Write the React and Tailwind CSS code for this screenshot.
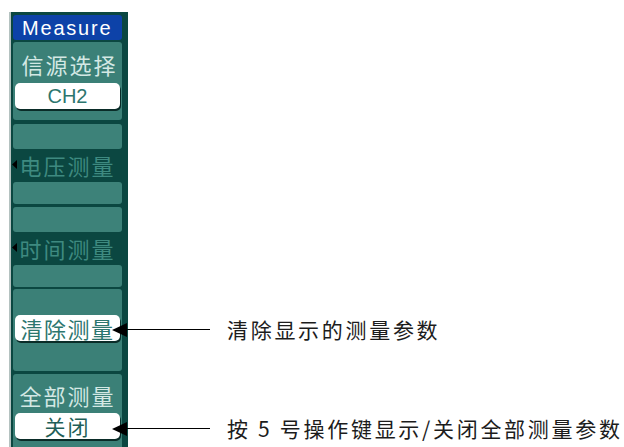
import React from "react";

const cjk = "font-['Noto_Sans_CJK_SC','Noto_Sans_CJK_JP',sans-serif]";

function Button({ children, className = "" }) {
  return (
    <div
      className={`mx-[2px] h-[26px] rounded-[5px] bg-white shadow-[1px_2px_0_#0a2c28] flex items-center justify-center ${className}`}
    >
      {children}
    </div>
  );
}

function Slot({ className = "" }) {
  return <div className={`rounded-[3px] bg-[#3d8279] ${className}`} />;
}

function DisabledItem({ label }) {
  return (
    <div className="h-[80px] flex flex-col">
      <Slot className="h-[25px]" />
      <div className="relative h-[31px] flex items-center justify-center">
        <svg className="absolute left-[-1px] top-[11px]" width="5" height="9" viewBox="0 0 5 9">
          <polygon points="0,4.5 5,0 5,9" fill="#000" />
        </svg>
        <span className={`${cjk} text-[22px] tracking-[2px] text-[#3e8a80] leading-none`}>{label}</span>
      </div>
      <Slot className="mt-[2px] h-[22px]" />
    </div>
  );
}

function Callout({ top, text }) {
  return (
    <div className="absolute left-[112px] flex items-center" style={{ top }}>
      <svg width="15" height="14" viewBox="0 0 15 14">
        <polygon points="0,7 15,0 15,14" fill="#000" />
      </svg>
      <div className="w-[83px] h-[1.5px] bg-black" />
      <span className={`${cjk} ml-[17px] text-[21px] tracking-[2.7px] text-[#1c1c1c] leading-none whitespace-nowrap`}>
        {text}
      </span>
    </div>
  );
}

export default function App() {
  return (
    <div className="relative w-[624px] h-[447px] bg-white overflow-hidden">
      <div className="ml-[9px] pt-[12px]">
        <div className="w-[119px] h-[435px] border-l-2 border-[#b4c2c0] bg-[#0b4741] pl-[2px] pr-[6px] pt-[3px] flex flex-col">
          {/* Title */}
          <div className="h-[25px] rounded-[3px] bg-[#0d42a8] flex items-center pl-[9px]">
            <span className="font-['Liberation_Sans',sans-serif] text-[20px] tracking-[1.8px] text-white leading-none">
              Measure
            </span>
          </div>

          {/* 信源选择 */}
          <div className="mt-[2px] h-[78px] rounded-[3px] bg-[#3b8077] pt-[9px]">
            <div className={`${cjk} h-[26px] flex items-center justify-center text-[22px] tracking-[2px] text-[#d3e8e4] leading-none pl-[4px]`}>
              信源选择
            </div>
            <Button className="mt-[6px]">
              <span className="font-['Liberation_Sans',sans-serif] text-[20px] text-[#2c766e] leading-none">CH2</span>
            </Button>
          </div>

          <div className="mt-[4px]">
            <DisabledItem label="电压测量" />
          </div>
          <div className="mt-[3px]">
            <DisabledItem label="时间测量" />
          </div>

          {/* 清除测量 */}
          <div className="mt-[2px] h-[82px] rounded-[3px] bg-[#3b8077] pt-[26px]">
            <Button>
              <span className={`${cjk} text-[22px] tracking-[1.5px] text-[#2c766e] leading-none`}>清除测量</span>
            </Button>
          </div>

          {/* 全部测量 */}
          <div className="mt-[3px] flex-1 rounded-t-[3px] bg-[#3b8077] pt-[8px]">
            <div className={`${cjk} h-[26px] flex items-center justify-center text-[22px] tracking-[2px] text-[#d3e8e4] leading-none`}>
              全部测量
            </div>
            <Button className="mt-[5px]">
              <span className={`${cjk} text-[21px] tracking-[2px] text-[#1f5f58] leading-none`}>关闭</span>
            </Button>
          </div>
        </div>
      </div>

      <Callout top={319} text="清除显示的测量参数" />
      <Callout top={418} text="按 5 号操作键显示/关闭全部测量参数" />
    </div>
  );
}
